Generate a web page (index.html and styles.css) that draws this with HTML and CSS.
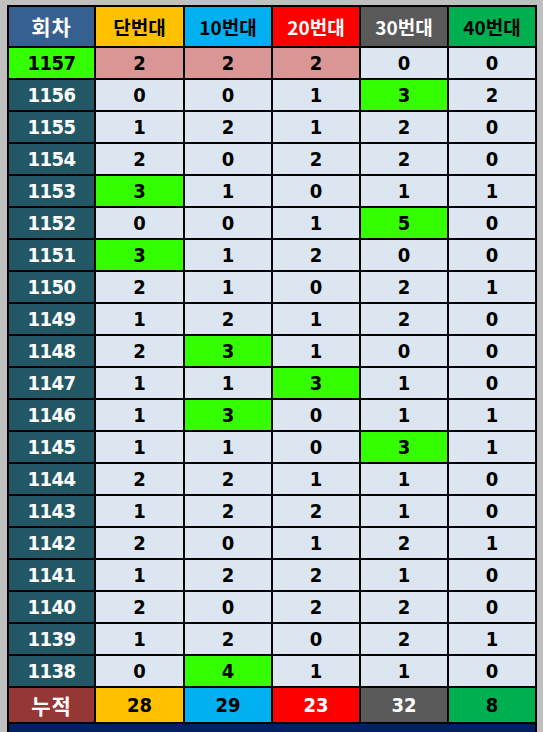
FILE: index.html
```html
<!DOCTYPE html>
<html lang="ko">
<head>
<meta charset="utf-8">
<title>번대별 출현</title>
<link rel="stylesheet" href="styles.css">
</head>
<body>
<div class="sheet">
  <div class="c h h-round">회차</div>
  <div class="c h h-1">단번대</div>
  <div class="c h h-10">10번대</div>
  <div class="c h h-20">20번대</div>
  <div class="c h h-30">30번대</div>
  <div class="c h h-40">40번대</div>

  <div class="c n lbl lbl-cur">1157</div>
  <div class="c n pink">2</div><div class="c n pink">2</div><div class="c n pink">2</div><div class="c n">0</div><div class="c n">0</div>

  <div class="c n lbl">1156</div>
  <div class="c n">0</div><div class="c n">0</div><div class="c n">1</div><div class="c n hit">3</div><div class="c n">2</div>

  <div class="c n lbl">1155</div>
  <div class="c n">1</div><div class="c n">2</div><div class="c n">1</div><div class="c n">2</div><div class="c n">0</div>

  <div class="c n lbl">1154</div>
  <div class="c n">2</div><div class="c n">0</div><div class="c n">2</div><div class="c n">2</div><div class="c n">0</div>

  <div class="c n lbl">1153</div>
  <div class="c n hit">3</div><div class="c n">1</div><div class="c n">0</div><div class="c n">1</div><div class="c n">1</div>

  <div class="c n lbl">1152</div>
  <div class="c n">0</div><div class="c n">0</div><div class="c n">1</div><div class="c n hit">5</div><div class="c n">0</div>

  <div class="c n lbl">1151</div>
  <div class="c n hit">3</div><div class="c n">1</div><div class="c n">2</div><div class="c n">0</div><div class="c n">0</div>

  <div class="c n lbl">1150</div>
  <div class="c n">2</div><div class="c n">1</div><div class="c n">0</div><div class="c n">2</div><div class="c n">1</div>

  <div class="c n lbl">1149</div>
  <div class="c n">1</div><div class="c n">2</div><div class="c n">1</div><div class="c n">2</div><div class="c n">0</div>

  <div class="c n lbl">1148</div>
  <div class="c n">2</div><div class="c n hit">3</div><div class="c n">1</div><div class="c n">0</div><div class="c n">0</div>

  <div class="c n lbl">1147</div>
  <div class="c n">1</div><div class="c n">1</div><div class="c n hit">3</div><div class="c n">1</div><div class="c n">0</div>

  <div class="c n lbl">1146</div>
  <div class="c n">1</div><div class="c n hit">3</div><div class="c n">0</div><div class="c n">1</div><div class="c n">1</div>

  <div class="c n lbl">1145</div>
  <div class="c n">1</div><div class="c n">1</div><div class="c n">0</div><div class="c n hit">3</div><div class="c n">1</div>

  <div class="c n lbl">1144</div>
  <div class="c n">2</div><div class="c n">2</div><div class="c n">1</div><div class="c n">1</div><div class="c n">0</div>

  <div class="c n lbl">1143</div>
  <div class="c n">1</div><div class="c n">2</div><div class="c n">2</div><div class="c n">1</div><div class="c n">0</div>

  <div class="c n lbl">1142</div>
  <div class="c n">2</div><div class="c n">0</div><div class="c n">1</div><div class="c n">2</div><div class="c n">1</div>

  <div class="c n lbl">1141</div>
  <div class="c n">1</div><div class="c n">2</div><div class="c n">2</div><div class="c n">1</div><div class="c n">0</div>

  <div class="c n lbl">1140</div>
  <div class="c n">2</div><div class="c n">0</div><div class="c n">2</div><div class="c n">2</div><div class="c n">0</div>

  <div class="c n lbl">1139</div>
  <div class="c n">1</div><div class="c n">2</div><div class="c n">0</div><div class="c n">2</div><div class="c n">1</div>

  <div class="c n lbl">1138</div>
  <div class="c n">0</div><div class="c n hit">4</div><div class="c n">1</div><div class="c n">1</div><div class="c n">0</div>

  <div class="c h t-lbl">누적</div>
  <div class="c n t t-1">28</div>
  <div class="c n t t-10">29</div>
  <div class="c n t t-20">23</div>
  <div class="c n t t-30">32</div>
  <div class="c n t t-40">8</div>

  <div class="footer"></div>
</div>
</body>
</html>
```

FILE: styles.css
```css
html, body {
  margin: 0;
  padding: 0;
  background: #c0c0c0;
}
body {
  padding: 5px 0 0 7px;
  height: 732px;
  box-sizing: border-box;
  overflow: hidden;
}
.sheet {
  width: 530px;
  box-sizing: border-box;
  display: grid;
  grid-template-columns: 85px 87px 86px 86px 86px 86px;
  grid-template-rows: 39px repeat(20, 30px) 34px 20px;
  gap: 2px;
  padding: 2px 2px 0 2px;
  background: #000;
}
.c {
  display: flex;
  align-items: center;
  justify-content: center;
  background: #dce6f1;
  color: #000;
  line-height: 1;
}
.h {
  font-family: "Noto Sans CJK KR", "Noto Sans", sans-serif;
  font-weight: 700;
  font-size: 19px;
}
.n {
  font-family: "DejaVu Sans Condensed", "DejaVu Sans", sans-serif;
  font-stretch: condensed;
  font-weight: 700;
  font-size: 20px;
}
.h-round { background: #36608f; color: #fff; font-size: 21px; letter-spacing: 1px; }
.h-1 { background: #ffc000; }
.h-10 { background: #00b0f0; }
.h-20 { background: #ff0000; color: #fff; }
.h-30 { background: #595959; color: #fff; }
.h-40 { background: #00b050; }
.lbl { background: #225765; color: #fff; letter-spacing: -0.5px; }
.lbl-cur { background: #33ff00; color: #000; }
.pink { background: #da9694; }
.hit { background: #33ff00; }
.t-lbl { background: #953735; color: #fff; font-size: 21px; letter-spacing: 1px; }
.t { font-size: 20px; }
.t-1 { background: #ffc000; }
.t-10 { background: #00b0f0; }
.t-20 { background: #ff0000; color: #fff; }
.t-30 { background: #595959; color: #fff; }
.t-40 { background: #00b050; }
.footer {
  grid-column: 1 / -1;
  background: #002060;
}
```
